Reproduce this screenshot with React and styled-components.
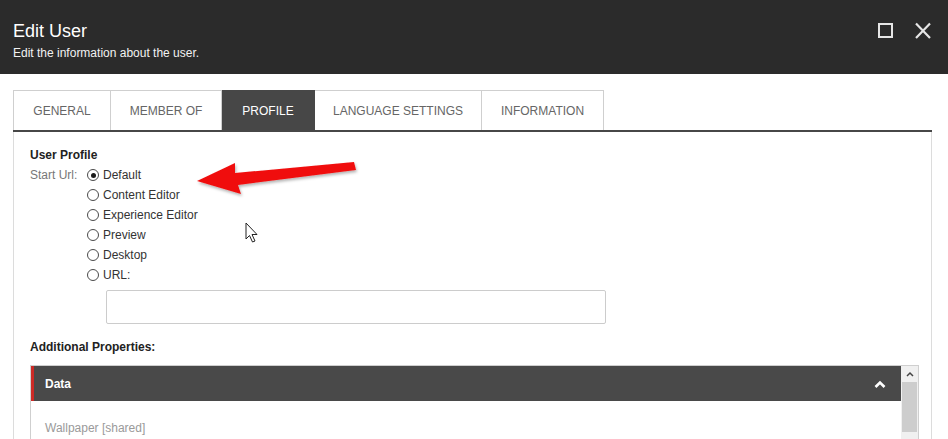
import React from 'react';
import styled, { createGlobalStyle } from 'styled-components';

const GlobalStyle = createGlobalStyle`
  html, body {
    margin: 0;
    padding: 0;
    background: #fff;
    overflow: hidden;
  }
  body {
    font-family: "Liberation Sans", Arial, sans-serif;
    font-size: 12px;
    color: #333;
  }
`;

const Dialog = styled.div`
  position: relative;
  width: 948px;
  height: 439px;
  overflow: hidden;
  background: #fff;
`;

const Header = styled.header`
  height: 74px;
  box-sizing: border-box;
  background: #2b2b2b;
  display: flex;
  justify-content: space-between;
  padding: 20px 16px 0 13px;
`;

const Title = styled.h1`
  margin: 0;
  font-size: 18px;
  line-height: 22px;
  font-weight: normal;
  color: #fff;
`;

const Subtitle = styled.div`
  margin-top: 4px;
  font-size: 12px;
  line-height: 14px;
  color: #f2f2f2;
`;

const Controls = styled.div`
  display: flex;
  gap: 19px;
  padding-top: 2px;
`;

const IconButton = styled.span`
  display: block;
  width: 18px;
  height: 18px;
  color: #e6e6e6;
`;

const Body = styled.div`
  padding: 16px 16px 0 13px;
`;

const TabBar = styled.nav`
  display: flex;
  border-bottom: 2px solid #474747;
`;

const Tab = styled.div`
  width: ${(p) => p.$width}px;
  height: 40px;
  box-sizing: border-box;
  display: flex;
  align-items: center;
  justify-content: center;
  border: 1px solid ${(p) => (p.$active ? '#474747' : '#cfcfcf')};
  border-bottom: 0;
  background: ${(p) => (p.$active ? '#474747' : '#fff')};
  color: ${(p) => (p.$active ? '#fff' : '#666')};
  font-size: 12px;
  text-transform: uppercase;
  white-space: nowrap;
  & + & {
    border-left: 0;
  }
`;

const Panel = styled.section`
  border-left: 1px solid #dcdcdc;
  border-right: 1px solid #dcdcdc;
  padding: 16px 14px 40px 16px;
`;

const SectionTitle = styled.div`
  font-weight: bold;
  color: #222;
  line-height: 14px;
`;

const FieldRow = styled.div`
  display: flex;
  margin-top: 3px;
`;

const FieldLabel = styled.div`
  width: 57px;
  color: #777;
  line-height: 20px;
`;

const RadioList = styled.div`
  display: flex;
  flex-direction: column;
`;

const RadioRow = styled.label`
  height: 20px;
  display: flex;
  align-items: center;
  gap: 4px;
  color: #333;
`;

const RadioCircle = styled.span`
  width: 10px;
  height: 10px;
  border: 1px solid #4a4a4a;
  border-radius: 50%;
  background: #fff;
  display: flex;
  align-items: center;
  justify-content: center;
  &::after {
    content: '';
    width: 5px;
    height: 5px;
    border-radius: 50%;
    background: ${(p) => (p.$checked ? '#1a1a1a' : 'transparent')};
  }
`;

const UrlInput = styled.div`
  margin: 5px 0 0 76px;
  width: 500px;
  height: 34px;
  box-sizing: border-box;
  border: 1px solid #cccccc;
  border-radius: 2px;
`;

const AdditionalTitle = styled(SectionTitle)`
  margin-top: 16px;
`;

const DataBox = styled.div`
  margin-top: 11px;
  width: 889px;
  box-sizing: border-box;
  border: 1px solid #cfcfcf;
  display: flex;
`;

const DataMain = styled.div`
  flex: 1;
`;

const DataHeader = styled.div`
  height: 35px;
  box-sizing: border-box;
  background: #494949;
  border-left: 3px solid #cc2a26;
  display: flex;
  align-items: center;
  justify-content: space-between;
  padding: 0 15px 0 11px;
  color: #fff;
  font-weight: bold;
`;

const DataBody = styled.div`
  padding: 20px 14px;
  color: #9a9a9a;
`;

const Scrollbar = styled.div`
  width: 17px;
  background: #f0f0f0;
  display: flex;
  flex-direction: column;
  align-items: center;
`;

const ScrollArrow = styled.div`
  height: 16px;
  display: flex;
  align-items: center;
  justify-content: center;
`;

const ScrollThumb = styled.div`
  width: 15px;
  height: 50px;
  background: #cdcdcd;
`;

const Overlay = styled.svg`
  position: absolute;
  left: 0;
  top: 0;
  pointer-events: none;
`;

const tabs = [
  { label: 'General', width: 98 },
  { label: 'Member Of', width: 111 },
  { label: 'Profile', width: 93 },
  { label: 'Language Settings', width: 167 },
  { label: 'Information', width: 122 },
];
const options = ['Default', 'Content Editor', 'Experience Editor', 'Preview', 'Desktop', 'URL:'];

export default function App() {
  return (
    <Dialog>
      <GlobalStyle />
      <Header>
        <div>
          <Title>Edit User</Title>
          <Subtitle>Edit the information about the user.</Subtitle>
        </div>
        <Controls>
          <IconButton>
            <svg width="18" height="18" viewBox="0 0 18 18">
              <rect x="2" y="2" width="13" height="13" fill="none" stroke="currentColor" strokeWidth="2" />
            </svg>
          </IconButton>
          <IconButton>
            <svg width="18" height="18" viewBox="0 0 18 18">
              <path d="M2 1.5 L16 16 M16 1.5 L2 16" stroke="currentColor" strokeWidth="2.2" />
            </svg>
          </IconButton>
        </Controls>
      </Header>

      <Body>
        <TabBar>
          {tabs.map((t) => (
            <Tab key={t.label} $width={t.width} $active={t.label === 'Profile'}>
              {t.label}
            </Tab>
          ))}
        </TabBar>
        <Panel>
          <SectionTitle>User Profile</SectionTitle>
          <FieldRow>
            <FieldLabel>Start Url:</FieldLabel>
            <RadioList>
              {options.map((o, i) => (
                <RadioRow key={o}>
                  <RadioCircle $checked={i === 0} />
                  {o}
                </RadioRow>
              ))}
            </RadioList>
          </FieldRow>
          <UrlInput />
          <AdditionalTitle>Additional Properties:</AdditionalTitle>
          <DataBox>
            <DataMain>
              <DataHeader>
                <span>Data</span>
                <svg width="12" height="8" viewBox="0 0 12 8">
                  <path d="M1.5 7 L6 2.5 L10.5 7" fill="none" stroke="#fff" strokeWidth="2.6" />
                </svg>
              </DataHeader>
              <DataBody>Wallpaper [shared]</DataBody>
            </DataMain>
            <Scrollbar>
              <ScrollArrow>
                <svg width="8" height="6" viewBox="0 0 8 6">
                  <path d="M1 5 L4 2 L7 5" fill="none" stroke="#444" strokeWidth="1.5" />
                </svg>
              </ScrollArrow>
              <ScrollThumb />
            </Scrollbar>
          </DataBox>
        </Panel>
      </Body>

      <Overlay width="948" height="439" viewBox="0 0 948 439">
        <defs>
          <filter id="shadow" x="-10%" y="-30%" width="130%" height="180%">
            <feDropShadow dx="1" dy="2" stdDeviation="1.5" floodColor="#000" floodOpacity="0.3" />
          </filter>
        </defs>
        <polygon
          points="197,181 235,163 235,173 354,162 356,170 238,185 241,194"
          fill="#f01010"
          filter="url(#shadow)"
        />
        <path
          d="M246 223 L246 239 L249.5 235.5 L252.5 242 L255 241 L252 234.5 L257 234.5 Z"
          fill="#fff"
          stroke="#222"
          strokeWidth="1"
          strokeLinejoin="round"
        />
      </Overlay>
    </Dialog>
  );
}
